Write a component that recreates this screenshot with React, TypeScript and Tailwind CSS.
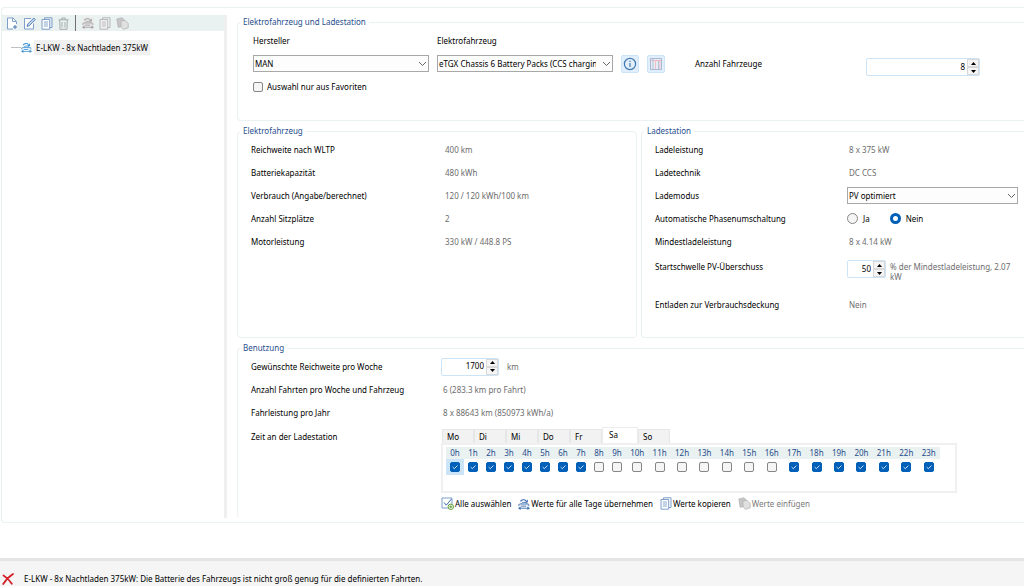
import { useState } from "react";
import type { ReactNode } from "react";

const days = ["Mo", "Di", "Mi", "Do", "Fr", "Sa", "So"];
const hours = Array.from({ length: 24 }, (_, i) => i);

const vehicleRows = [
  ["Reichweite nach WLTP", "400 km"],
  ["Batteriekapazität", "480 kWh"],
  ["Verbrauch (Angabe/berechnet)", "120 / 120 kWh/100 km"],
  ["Anzahl Sitzplätze", "2"],
  ["Motorleistung", "330 kW / 448.8 PS"],
];

/* ---------- Icons ---------- */

function NewIcon() {
  return (
    <svg width="12" height="13" viewBox="0 0 12 13" fill="none" stroke="#7d9fca">
      <path d="M10.5 7V4.5L7 1H1.5V12H7" fill="#fff" />
      <path d="M6.5 1V4.5H10" />
      <path d="M9 8V12M7 10H11" stroke="#4a78b5" />
    </svg>
  );
}

function EditIcon() {
  return (
    <svg width="13" height="13" viewBox="0 0 13 13" fill="none" stroke="#7d9fca">
      <path d="M8 1.5H1.5V12H10.5V6.5" fill="#fff" />
      <path d="M4 9.5L4.8 7L10.8 1L12.3 2.5L6.3 8.7Z" fill="#c3d6ec" stroke="#5b86bd" />
    </svg>
  );
}

function CopyIcon({ gray = false }: { gray?: boolean }) {
  return (
    <svg width="12" height="13" viewBox="0 0 12 13" fill="none" stroke={gray ? "#b8b8b8" : "#7d9fca"}>
      <path d="M3.5 2.5V.8H11V10.5H9" />
      <path d="M1 2.5H8.7V12.2H1Z" fill={gray ? "#f0f0f0" : "#fff"} />
      <path d="M2.8 5H7M2.8 7H7M2.8 9H7" strokeWidth="0.9" />
    </svg>
  );
}

function TrashIcon() {
  return (
    <svg width="11" height="13" viewBox="0 0 11 13" fill="none" stroke="#9fa3a3">
      <path d="M.5 2.8H10.5M3.8 2.5V1H7.2V2.5M1.7 3L2 12.3H9L9.3 3M4 5V10.5M7 5V10.5" strokeWidth="0.9" />
    </svg>
  );
}

function CarIcon({ color, size = 12 }: { color: string; size?: number }) {
  return (
    <svg width={size} height={size} viewBox="0 0 12 12" fill="none" stroke={color}>
      <path d="M.8 8.2V6.4L3 5.8L4.4 4.4H7.8L9.4 5.8L10.8 6.4V8.2" fill={color} fillOpacity="0.15" strokeWidth="0.8" />
      <path d="M3 6H9.4M3 8.2H8" strokeWidth="0.8" />
      <path d="M2.4 3.4C3.6 1.4 6.6 1.2 8.2 2.8" strokeWidth="1.1" />
      <path d="M9.8 1.4V4.4H6.8Z" fill={color} stroke="none" />
      <path d="M2 10.2H10" strokeWidth="0.9" />
      <path d="M0 10.2L2.6 8.4V12ZM12 10.2L9.4 8.4V12Z" fill={color} stroke="none" />
    </svg>
  );
}

function PasteIcon() {
  return (
    <svg width="13" height="13" viewBox="0 0 13 13" stroke="#b5b5b5" strokeWidth="0.8">
      <path d="M.8 2L5.8 .8L8 2.5L7.8 9L2.2 10.3Z" fill="#c6c6c6" />
      <path d="M4.8 4.2L9 3.2L12.2 6.5V10.8L7.5 12.3L5.2 10Z" fill="#e0e0e0" />
    </svg>
  );
}

function SelectAllIcon() {
  return (
    <svg width="13" height="13" viewBox="0 0 13 13" fill="none">
      <path d="M1 1H11V11H1Z" fill="#fff" stroke="#7d9fca" />
      <path d="M3 5.5L5.3 8.2L10.5 2" stroke="#3b6cae" />
      <circle cx="9.8" cy="9.8" r="2.7" fill="#fff" stroke="#5e9c38" />
      <path d="M8.3 9.8H11.3M9.8 8.3V11.3" stroke="#5e9c38" />
    </svg>
  );
}

/* ---------- Controls ---------- */

function Chevron() {
  return (
    <svg className="pointer-events-none absolute top-1/2 right-0.5 -translate-y-1/2" width="9" height="6" viewBox="0 0 9 6" fill="none" stroke="#555">
      <path d="M1 1L4.5 4.5L8 1" strokeWidth="0.9" />
    </svg>
  );
}

function Select({ id, options, className = "" }: { id: string; options: string[]; className?: string }) {
  return (
    <div className={`relative ${className}`}>
      <select id={id} className="block h-[17px] w-full appearance-none overflow-hidden border border-[#a8a8a8] bg-[#fdfdfd] pr-4 pl-px leading-[15px] text-black">
        {options.map((o) => (
          <option key={o}>{o}</option>
        ))}
      </select>
      <Chevron />
    </div>
  );
}

function Spinner({ id, start, className = "" }: { id: string; start: number; className?: string }) {
  const [value, setValue] = useState(start);
  return (
    <div className={`flex h-[18px] shrink-0 items-center rounded-xs border border-[#cce4f7] bg-white ${className}`}>
      <input
        id={id}
        value={value}
        onChange={(e) => setValue(Number(e.target.value) || 0)}
        className="h-4 w-full min-w-0 bg-transparent pr-0.5 pb-0.5 text-right text-black outline-none"
      />
      <span className="flex h-4 w-3 shrink-0 flex-col bg-[#e9e9e9]">
        <button type="button" aria-label="Erhöhen" onClick={() => setValue(value + 1)} className="flex h-2 items-center justify-center border border-[#d9d9d9] bg-[#f5f5f5]">
          <svg width="5" height="3" viewBox="0 0 5 3"><path d="M0 3L2.5 0L5 3Z" /></svg>
        </button>
        <button type="button" aria-label="Verringern" onClick={() => setValue(value - 1)} className="flex h-2 items-center justify-center border border-[#d9d9d9] bg-[#f5f5f5]">
          <svg width="5" height="3" viewBox="0 0 5 3"><path d="M0 0L2.5 3L5 0Z" /></svg>
        </button>
      </span>
    </div>
  );
}

function Check({ id, label, checked, onChange }: { id: string; label?: string; checked: boolean; onChange: () => void }) {
  return (
    <span className="relative block size-2.5">
      <input
        id={id}
        type="checkbox"
        aria-label={label}
        checked={checked}
        onChange={onChange}
        className="block size-2.5 appearance-none rounded-xs border border-[#868686] bg-[#f5f5f5] checked:border-[#005fb8] checked:bg-[#005fb8]"
      />
      {checked && (
        <svg className="pointer-events-none absolute inset-0" width="10" height="10" viewBox="0 0 10 10" fill="none" stroke="#fff">
          <path d="M2.6 5L4.3 6.7L7.5 3.5" strokeWidth="0.8" />
        </svg>
      )}
    </span>
  );
}

function Radio({ label, checked, onChange }: { label: string; checked: boolean; onChange: () => void }) {
  return (
    <label className="flex items-center gap-[5px] text-black">
      <input
        type="radio"
        name="phase"
        checked={checked}
        onChange={onChange}
        className="size-[11px] appearance-none rounded-full border border-[#868686] bg-[#f5f5f5] checked:border-[3px] checked:border-[#005fb8] checked:bg-white"
      />
      {label}
    </label>
  );
}

function Group({ title, className = "", children }: { title: string; className?: string; children: ReactNode }) {
  return (
    <fieldset className={`min-w-0 border border-[#eaf1f1] ${className}`}>
      <legend className="ml-0.5 px-[3px] leading-3 text-[#1f4e8c]">{title}</legend>
      {children}
    </fieldset>
  );
}

function Row({ label, htmlFor, cols = "grid-cols-[194px_1fr]", children }: { label: string; htmlFor?: string; cols?: string; children: ReactNode }) {
  return (
    <div className={`grid min-h-[23px] items-center text-[#6d6d6d] ${cols}`}>
      {htmlFor ? (
        <label htmlFor={htmlFor} className="text-black">{label}</label>
      ) : (
        <span className="text-black">{label}</span>
      )}
      <div className="min-w-0">{children}</div>
    </div>
  );
}

/* ---------- Page parts ---------- */

function Sidebar() {
  return (
    <aside className="w-[225px] shrink-0 border-r-[3px] border-[#efefef]">
      <div className="flex h-4 items-center gap-[5px] bg-[#eaf1f1] pl-1">
        <button type="button" aria-label="Neu"><NewIcon /></button>
        <button type="button" aria-label="Bearbeiten"><EditIcon /></button>
        <button type="button" aria-label="Kopieren"><CopyIcon /></button>
        <button type="button" aria-label="Löschen"><TrashIcon /></button>
        <span className="mx-px h-4 w-px bg-[#707070]" />
        <button type="button" aria-label="Für alle übernehmen" className="bg-[#ececec]"><CarIcon color="#a3a3a3" /></button>
        <button type="button" aria-label="Werte kopieren"><CopyIcon gray /></button>
        <button type="button" aria-label="Werte einfügen"><PasteIcon /></button>
      </div>
      <div className="mt-[9px] flex items-center pl-[9px]">
        <span className="w-2.5 border-t border-[#c0c0c0]" />
        <CarIcon color="#3a8fd0" size={11} />
        <span className="ml-0.5 bg-[#f0f0f0] px-0.5 leading-[15px]">E-LKW - 8x Nachtladen 375kW</span>
      </div>
    </aside>
  );
}

function VehicleSelection() {
  const [fav, setFav] = useState(false);
  return (
    <Group title="Elektrofahrzeug und Ladestation" className="rounded-l-sm border-r-0">
      <div className="flex h-[92px] gap-2 pl-[15px]">
        <div className="w-44">
          <label htmlFor="maker" className="block pt-[7px] pb-2 leading-3">Hersteller</label>
          <Select id="maker" options={["MAN"]} />
          <div className="mt-[9px] flex items-center gap-1">
            <Check id="fav" checked={fav} onChange={() => setFav(!fav)} />
            <label htmlFor="fav">Auswahl nur aus Favoriten</label>
          </div>
        </div>
        <div className="w-44">
          <label htmlFor="vehicle" className="block pt-[7px] pb-2 leading-3">Elektrofahrzeug</label>
          <Select id="vehicle" options={["eTGX Chassis 6 Battery Packs (CCS charging)"]} />
        </div>
        <div className="flex gap-2 pt-[27px]">
          <button type="button" aria-label="Info" className="flex size-[18px] items-center justify-center rounded-xs border border-[#cce4f7] bg-[#e0effb]">
            <svg width="14" height="14" viewBox="0 0 14 14" fill="none" stroke="#4477b0">
              <circle cx="7" cy="7" r="5.6" strokeWidth="1.2" />
              <path d="M7 6V10M7 3.7V5" strokeWidth="1.2" />
            </svg>
          </button>
          <button type="button" aria-label="Datenblatt" className="flex size-[18px] items-center justify-center rounded-xs border border-[#cce4f7] bg-[#e0effb]">
            <svg width="12" height="12" viewBox="0 0 12 12" fill="none">
              <path d="M.5 .5H11.5V11.5H.5Z" fill="#e6ebf4" stroke="#a7b9d3" />
              <path d="M1 2.5H11" stroke="#efb5bd" />
              <path d="M3 1V11M8.5 3V11" stroke="#b5c4da" />
              <path d="M5.5 2V11M9.8 3V11" stroke="#f0c0c8" />
            </svg>
          </button>
        </div>
        <div className="flex items-start pt-[30px] pl-[22px]">
          <label htmlFor="count" className="w-[171px] leading-3">Anzahl Fahrzeuge</label>
          <Spinner id="count" start={8} className="w-[114px]" />
        </div>
      </div>
    </Group>
  );
}

function ChargingStation() {
  const [phase, setPhase] = useState("Nein");
  return (
    <Group title="Ladestation" className="rounded-l-sm border-r-0">
      <div className="pt-px pr-1.5 pl-[13px]">
        <Row label="Ladeleistung">8 x 375 kW</Row>
        <Row label="Ladetechnik">DC CCS</Row>
        <Row label="Lademodus" htmlFor="mode">
          <Select id="mode" options={["PV optimiert"]} className="-ml-0.5" />
        </Row>
        <Row label="Automatische Phasenumschaltung">
          <div className="-ml-0.5 flex gap-5">
            <Radio label="Ja" checked={phase === "Ja"} onChange={() => setPhase("Ja")} />
            <Radio label="Nein" checked={phase === "Nein"} onChange={() => setPhase("Nein")} />
          </div>
        </Row>
        <Row label="Mindestladeleistung">8 x 4.14 kW</Row>
        <div className="grid grid-cols-[194px_1fr] pt-[7px] text-[#6d6d6d]">
          <label htmlFor="threshold" className="pt-px text-black">Startschwelle PV-Überschuss</label>
          <div className="-ml-0.5 flex gap-1">
            <Spinner id="threshold" start={50} className="w-[39px]" />
            <span className="pt-0.5 leading-[10px]">% der Mindestladeleistung, 2.07 kW</span>
          </div>
        </div>
        <div className="pt-[11px] pb-[21px]">
          <Row label="Entladen zur Verbrauchsdeckung">Nein</Row>
        </div>
      </div>
    </Group>
  );
}

function ChargingTimes() {
  const [day, setDay] = useState("Sa");
  const [active, setActive] = useState(hours.filter((h) => h < 8 || h > 16));

  const toggle = (h: number) =>
    setActive(active.includes(h) ? active.filter((x) => x !== h) : [...active, h]);

  return (
    <div className="-ml-0.5">
      <div className="flex items-end pl-px" role="tablist">
        {days.map((d) => (
          <button
            key={d}
            type="button"
            role="tab"
            aria-selected={d === day}
            onClick={() => setDay(d)}
            className={
              d === day
                ? "h-4 w-9 border border-b-0 border-[#ececec] bg-white pb-0.5 pl-1.5 text-left text-black"
                : "h-3.5 w-8 border border-b-0 border-[#e6e6e6] bg-[#f2f2f2] pl-1 text-left text-black"
            }
          >
            {d}
          </button>
        ))}
      </div>
      <div className="h-[50px] w-[516px] border-2 border-[#f0f0f0] pt-0.5 pl-[3px]">
        <table className="w-[494px] table-fixed border-collapse">
          <thead>
            <tr className="bg-[#eaf1f1] text-[#1f4e8c]">
              {hours.map((h) => (
                <th key={h} className={h < 10 ? "h-3 w-[18px] p-0 font-normal" : "h-3 p-0 font-normal"}>{h}h</th>
              ))}
            </tr>
          </thead>
          <tbody>
            <tr>
              {hours.map((h) => (
                <td key={h} className={h === 0 ? "h-4 bg-[#cce4f7] p-0" : "h-4 p-0"}>
                  <div className="flex justify-center">
                    <Check id={`hour-${h}`} label={`${h}h`} checked={active.includes(h)} onChange={() => toggle(h)} />
                  </div>
                </td>
              ))}
            </tr>
          </tbody>
        </table>
      </div>
      <div className="mt-1 flex gap-[7px] text-black">
        <button type="button" className="flex items-center gap-px"><SelectAllIcon />Alle auswählen</button>
        <button type="button" className="flex items-center gap-px"><CarIcon color="#3b6cae" />Werte für alle Tage übernehmen</button>
        <button type="button" className="flex items-center gap-px"><CopyIcon />Werte kopieren</button>
        <button type="button" className="flex items-center gap-px text-[#7a7a7a]"><PasteIcon />Werte einfügen</button>
      </div>
    </div>
  );
}

export default function App() {
  return (
    <div className="flex min-h-screen flex-col bg-white font-['Noto_Sans','Open_Sans',sans-serif] text-[8px] leading-3 text-black">
      <main className="mt-[7px] ml-px flex rounded-l-sm border border-r-0 border-[#eaf1f1] pt-[7px] pb-1">
        <Sidebar />
        <div className="ml-2.5 flex min-w-0 flex-1 flex-col gap-1 pt-px">
          <VehicleSelection />
          <div className="grid grid-cols-[400px_1fr] gap-1">
            <Group title="Elektrofahrzeug" className="rounded-sm">
              <div className="pt-px pl-[13px]">
                {vehicleRows.map(([label, value]) => (
                  <Row key={label} label={label}>{value}</Row>
                ))}
              </div>
            </Group>
            <ChargingStation />
          </div>
          <Group title="Benutzung" className="rounded-l-sm border-r-0 border-b-0">
            <div className="pt-px pb-2 pl-[13px]">
              <Row label="Gewünschte Reichweite pro Woche" htmlFor="range" cols="grid-cols-[192px_1fr]">
                <div className="-ml-0.5 flex items-center gap-2">
                  <Spinner id="range" start={1700} className="w-[58px]" />
                  km
                </div>
              </Row>
              <Row label="Anzahl Fahrten pro Woche und Fahrzeug" cols="grid-cols-[192px_1fr]">6 (283.3 km pro Fahrt)</Row>
              <Row label="Fahrleistung pro Jahr" cols="grid-cols-[192px_1fr]">8 x 88643 km (850973 kWh/a)</Row>
              <div className="grid grid-cols-[192px_1fr] pt-[3px]">
                <span className="pt-1">Zeit an der Ladestation</span>
                <ChargingTimes />
              </div>
            </div>
          </Group>
        </div>
      </main>
      <footer className="mt-auto flex h-7 items-center gap-2.5 border-t-[3px] border-[#e5e5e5] bg-[#f5f5f5] pt-2.5 pl-0.5">
        <svg width="12" height="12" viewBox="0 0 12 12" fill="none" stroke="#d3202a" strokeLinecap="round">
          <path d="M1.5 2.5C5 4.5 8 8 9.8 10.8M11 1C7 3.5 3.5 7.5 1.2 11" strokeWidth="1.8" />
        </svg>
        E-LKW - 8x Nachtladen 375kW: Die Batterie des Fahrzeugs ist nicht groß genug für die definierten Fahrten.
      </footer>
    </div>
  );
}
